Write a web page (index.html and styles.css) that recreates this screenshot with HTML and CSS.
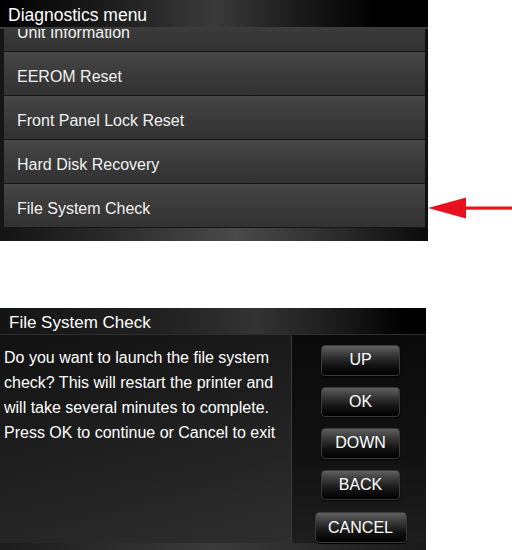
FILE: index.html
```html
<!DOCTYPE html>
<html lang="en">
<head>
    <meta charset="UTF-8">
    <meta name="viewport" content="width=device-width, initial-scale=1.0">
    <title>Diagnostics menu</title>
    <link rel="stylesheet" href="styles.css">
</head>
<body>

    <!-- Screen 1: diagnostics list with arrow -->
    <div class="top-row">
        <div class="screen menu-screen">
            <div class="title-bar">Diagnostics menu</div>
            <div class="menu-list">
                <div class="menu-item partial">Unit Information</div>
                <div class="menu-item">EEROM Reset</div>
                <div class="menu-item">Front Panel Lock Reset</div>
                <div class="menu-item">Hard Disk Recovery</div>
                <div class="menu-item">File System Check</div>
            </div>
            <div class="bottom-bar"></div>
        </div>
        <svg class="arrow" width="84" height="241" viewBox="0 0 84 241">
            <rect x="34" y="206.5" width="50" height="3.2" fill="#e8121e"/>
            <polygon points="0,208 38,197.5 38,218.5" fill="#e8121e"/>
        </svg>
    </div>

    <!-- Screen 2: confirmation dialog -->
    <div class="screen dialog-screen">
        <div class="title-bar small">File System Check</div>
        <div class="dialog-body">
            <div class="message">
                <p>Do you want to launch the file system check? This will restart the printer and will take several minutes to complete. Press OK to continue or Cancel to exit</p>
            </div>
            <div class="buttons">
                <button class="btn">UP</button>
                <button class="btn">OK</button>
                <button class="btn">DOWN</button>
                <button class="btn">BACK</button>
                <button class="btn wide">CANCEL</button>
            </div>
        </div>
    </div>

</body>
</html>
```
FILE: styles.css
```css
/* Base */
html, body {
    margin: 0;
    padding: 0;
    background-color: white;
    font-family: 'Liberation Sans', Arial, sans-serif;
}
.top-row {
    display: flex;
}
.screen {
    background-color: #000;
    color: white;
}

/* Title bars */
.title-bar {
    height: 27px;
    line-height: 30px;
    padding-left: 8px;
    font-size: 17.5px;
    background: linear-gradient(90deg, #000 0%, #1c1c1c 25%, #3a3a3a 50%, #1a1a1a 70%, #000 88%);
    border-bottom: 2px solid #3c3c3c;
}
.title-bar.small {
    height: 26px;
    line-height: 30px;
    font-size: 17px;
    padding-left: 9px;
    background: linear-gradient(90deg, #141414 0%, #222 40%, #333 60%, #1a1a1a 80%, #000 95%);
    border-bottom: 1px solid #2e2e2e;
}

/* Menu screen */
.menu-screen {
    width: 428px;
    height: 241px;
}
.menu-list {
    height: 199px;
    overflow: hidden;
    border-left: 4px solid #161616;
    border-right: 3px solid #101010;
    background-color: #1a1a1a;
}
.menu-item {
    height: 42px;
    line-height: 47px;
    padding-left: 13px;
    font-size: 16px;
    color: #f2f2f2;
    background: linear-gradient(#464646, #383838 60%, #333);
    border-top: 1px solid #4a4a4a;
    border-bottom: 1px solid #141414;
}
.menu-item.partial {
    margin-top: -21px;
}
.bottom-bar {
    height: 13px;
    background: linear-gradient(90deg, #141414 0%, #2a2a2a 25%, #4a4a4a 55%, #2a2a2a 80%, #0a0a0a 100%);
}
.arrow {
    display: block;
}

/* Dialog screen */
.dialog-screen {
    width: 426px;
    height: 242px;
    margin-top: 67px;
}
.dialog-body {
    display: flex;
    height: 215px;
    background: linear-gradient(90deg, #1c1c1c, #3a3a3a 50%, #1a1a1a);
}
.message {
    width: 292px;
    height: 208px;
    padding: 10px 0 0 4px;
    box-sizing: border-box;
    background: linear-gradient(165deg, #121212 0%, #1e1e1e 45%, #2e2e2e 100%);
    border-right: 1px solid #3a3a3a;
}
.message p {
    margin: 0;
    font-size: 16px;
    line-height: 25px;
}
.buttons {
    flex: 1;
    height: 208px;
    display: flex;
    flex-direction: column;
    align-items: center;
    gap: 11px;
    padding: 10px 0 0 3px;
    box-sizing: border-box;
    background: linear-gradient(#0a0a0a, #121212 60%, #1e1e1e);
}
.btn {
    width: 79px;
    height: 31px;
    padding: 0;
    color: white;
    font-family: 'Liberation Sans', Arial, sans-serif;
    font-size: 16px;
    border: 1px solid #3a3a3a;
    border-radius: 4px;
    background: linear-gradient(#606060 0%, #3a3a3a 30%, #141414 65%, #000 100%);
    box-shadow: 0 1px 1px #000;
}
.btn.wide {
    width: 92px;
    margin-top: 1px;
}
```
